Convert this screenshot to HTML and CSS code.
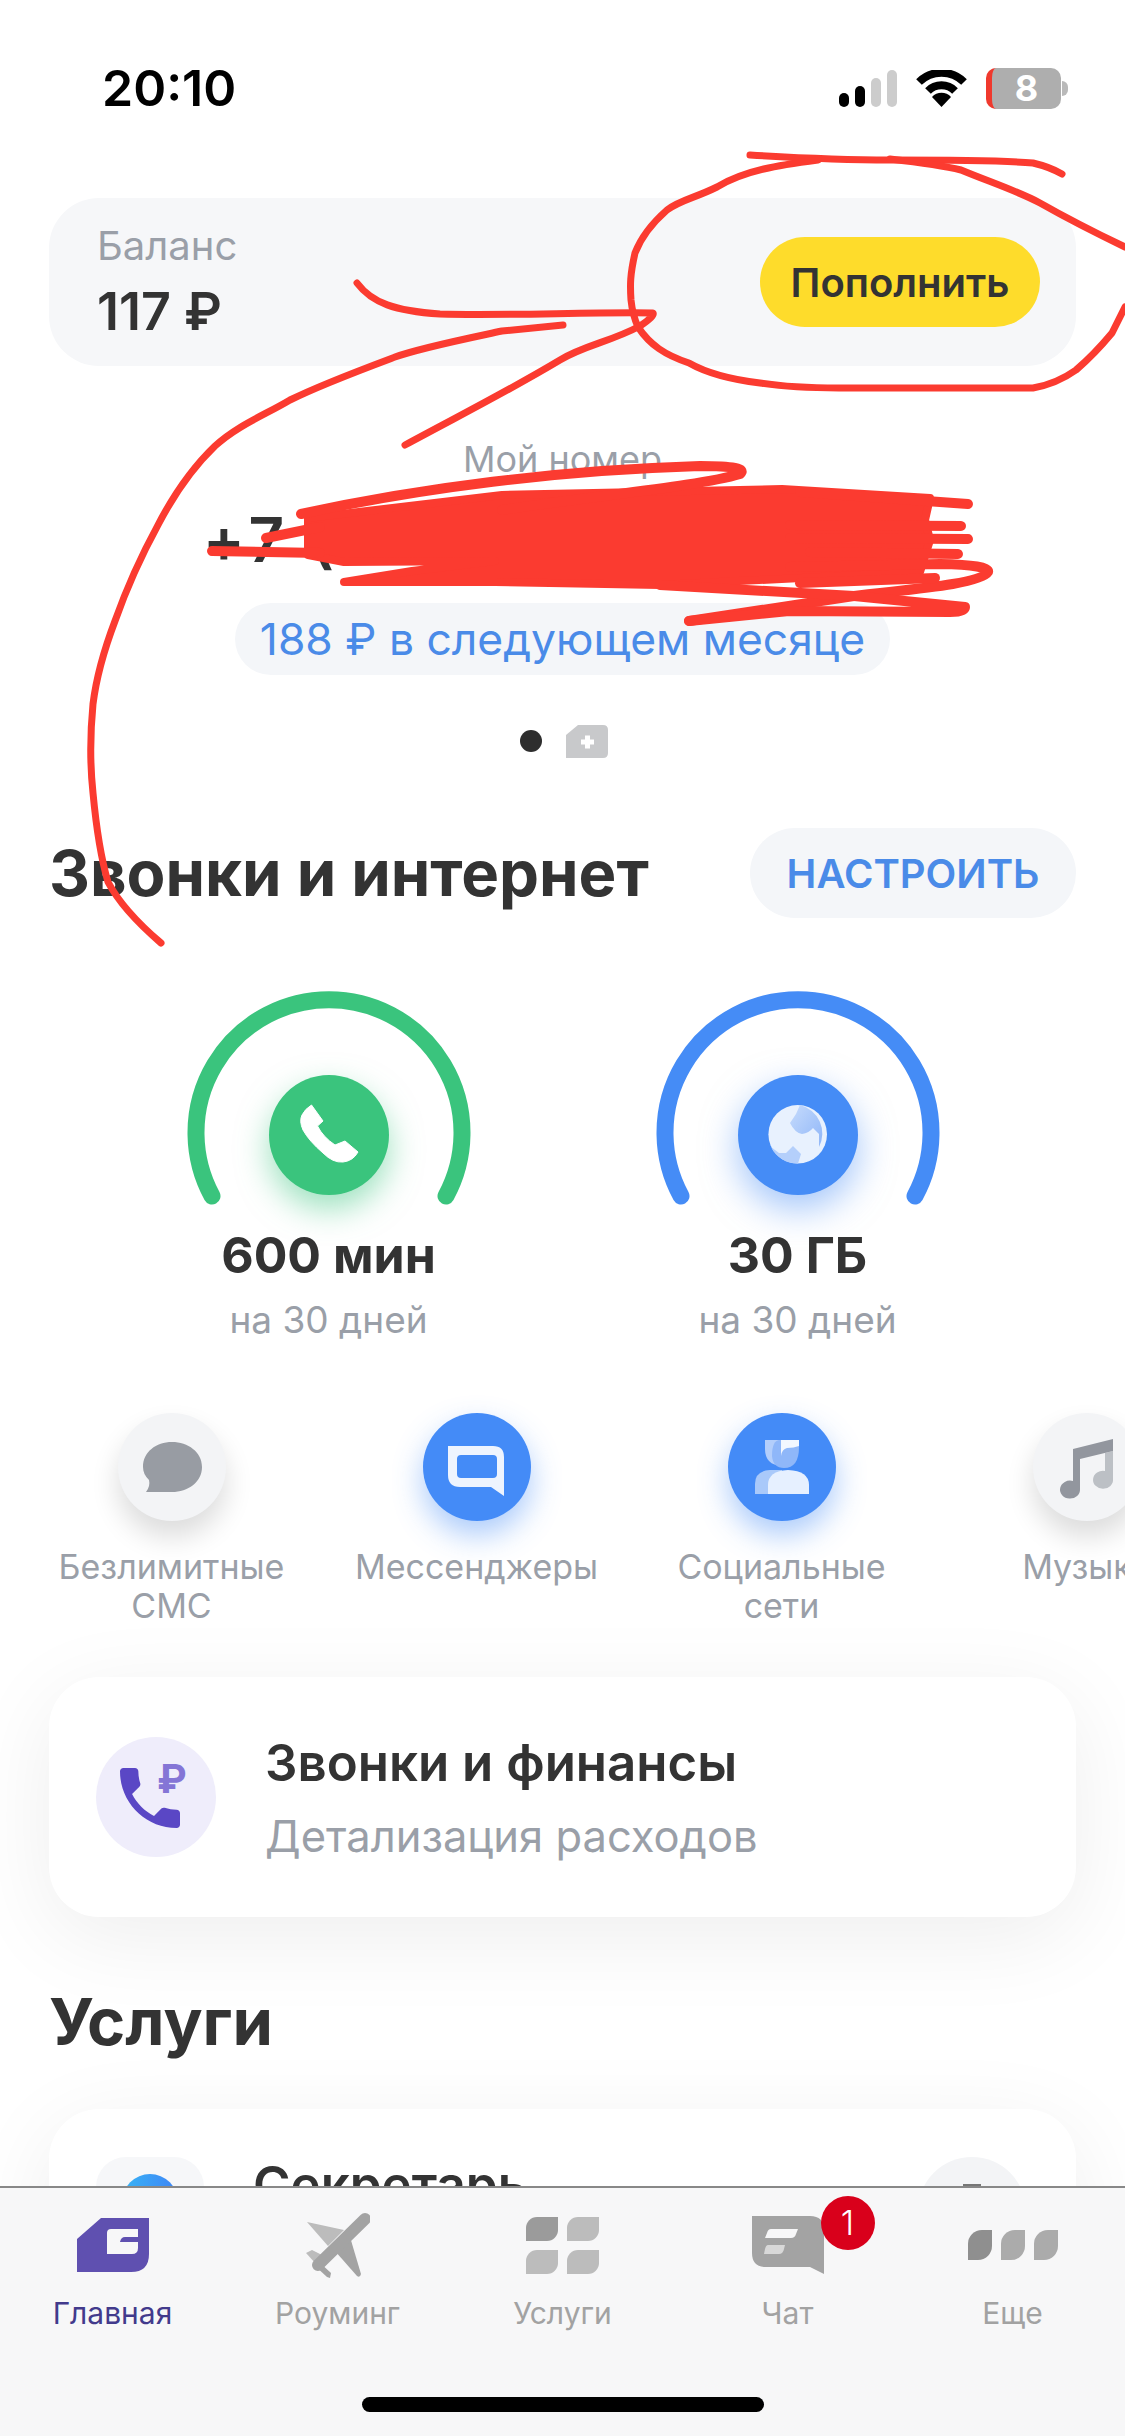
FILE: index.html
```html
<!DOCTYPE html>
<html lang="ru">
<head>
    <meta charset="UTF-8">
    <meta name="viewport" content="width=device-width, initial-scale=1.0">
    <title>Главная</title>
    <link rel="stylesheet" href="styles.css">
</head>
<body>
<div class="screen">
    <div class="status-bar">
        <span class="time">20:10</span>
        <div class="status-icons">
            <svg class="signal" width="58" height="37" viewBox="0 0 58 37">
                <rect x="0" y="23" width="10" height="14" rx="5" fill="#000"/>
                <rect x="16" y="16" width="10" height="21" rx="5" fill="#000"/>
                <rect x="32" y="8" width="10" height="29" rx="5" fill="#ccc"/>
                <rect x="48" y="0" width="10" height="37" rx="5" fill="#ccc"/>
            </svg>
            <svg class="wifi" width="51" height="37" viewBox="0 0 51 37">
                <path d="M3 12A32 32 0 0 1 48 12" fill="none" stroke="#000" stroke-width="8"/>
                <path d="M12 21A19 19 0 0 1 39 21" fill="none" stroke="#000" stroke-width="8"/>
                <path d="M25.5 37L16 27A13 13 0 0 1 35 27Z" fill="#000"/>
            </svg>
            <div class="battery">8</div>
        </div>
    </div>

    <div class="balance-card">
        <div>
            <div class="balance-label">Баланс</div>
            <div class="balance-value">117 ₽</div>
        </div>
        <button class="top-up">Пополнить</button>
    </div>

    <div class="number-block">
        <div class="number-label">Мой номер</div>
        <div class="number-value">+7 (000) 000-00-00</div>
        <div class="next-month">188 ₽ в следующем месяце</div>
    </div>

    <div class="pager">
        <span class="pager-dot"></span>
        <svg width="42" height="33" viewBox="0 0 42 33">
            <path d="M12 0H37Q42 0 42 5V28Q42 33 37 33H0V10Z" fill="#c8c9cb"/>
            <path d="M15 17H28M21.500 10.500V23.500" stroke="#fff" stroke-width="5"/>
        </svg>
    </div>

    <div class="section-head">
        <h2>Звонки и интернет</h2>
        <button class="setup">НАСТРОИТЬ</button>
    </div>

    <div class="gauges">
        <div class="gauge">
            <svg width="300" height="234" viewBox="0 0 300 234">
                <path d="M33 202A133 133 0 1 1 267 202" fill="none" stroke="#3ac47d" stroke-width="17" stroke-linecap="round"/>
                <circle class="glow-green" cx="150" cy="141" r="60" fill="#3ac47d"/>
                <path transform="translate(102 97)" d="M30.500 14L42 30L36.500 35Q42 46 54 54L64 50L77 61Q72 70 62 71Q52 72 42 62Q28 50 22 39Q18 30 21 24Q24 18 30.500 14Z" fill="#fff" stroke="#fff" stroke-linejoin="round"/>
            </svg>
            <div class="gauge-value">600 мин</div>
            <div class="gauge-note">на 30 дней</div>
        </div>
        <div class="gauge">
            <svg width="300" height="234" viewBox="0 0 300 234">
                <defs>
                    <linearGradient id="globeLand" x1="0" y1="0" x2="1" y2="1">
                        <stop offset="0" stop-color="#c6dbfc"/>
                        <stop offset="1" stop-color="#8fb6f8"/>
                    </linearGradient>
                </defs>
                <path d="M33 202A133 133 0 1 1 267 202" fill="none" stroke="#458cf6" stroke-width="17" stroke-linecap="round"/>
                <circle class="glow-blue" cx="150" cy="141" r="60" fill="#458cf6"/>
                <g transform="translate(103 97)">
                    <circle cx="46.700" cy="43.300" r="29.300" fill="#e8f1fe"/>
                    <path d="M49 14L45 23L39 32Q44 42 51 43Q58 42 62 37L68 43L68 56A29.300 29.300 0 0 0 49 14Z" fill="url(#globeLand)"/>
                    <path d="M20 56L28 62L35 62L42 55L50 63L47 72.500A29.300 29.300 0 0 1 20 56Z" fill="#b4cffb"/>
                </g>
            </svg>
            <div class="gauge-value">30 ГБ</div>
            <div class="gauge-note">на 30 дней</div>
        </div>
    </div>

    <div class="chips">
        <div class="chip">
            <div class="chip-circle chip-gray">
                <svg width="108" height="108" viewBox="0 0 108 108">
                    <path d="M54 29C70 29 84 39 84 54C84 69 70 79 54 79H28C31 75 32 71 31 67C27 63 25 59 25 54C25 39 38 29 54 29Z" fill="#989ca3"/>
                </svg>
            </div>
            <div class="chip-label">Безлимитные<br>СМС</div>
        </div>
        <div class="chip">
            <div class="chip-circle chip-blue">
                <svg width="108" height="108" viewBox="0 0 108 108">
                    <path fill-rule="evenodd" d="M25 33H70Q81 33 81 44V83L68 74H37Q25 74 25 62ZM38 42Q34 42 34 46V61Q34 65 38 65H70Q74 65 74 61V46Q74 42 70 42Z" fill="#eef4fe"/>
                </svg>
            </div>
            <div class="chip-label">Мессенджеры</div>
        </div>
        <div class="chip">
            <div class="chip-circle chip-blue">
                <svg width="108" height="108" viewBox="0 0 108 108">
                    <path d="M37 27H54V53Q37 52 37 36Z" fill="#b3cefb"/>
                    <path d="M52 27H71V34Q71 55 56 55Q45 55 44 43Q44 27 52 27Z" fill="#8fb7f9"/>
                    <path d="M53 27H71V33Q66 35 59 35Q54 36 53 43Z" fill="#f2f7ff"/>
                    <path d="M27 81V71Q27 58 42 57H54V81Z" fill="#a9c9fa"/>
                    <path d="M40 81V72Q40 58 60 57Q81 58 81 72V81Z" fill="#e6f0ff"/>
                </svg>
            </div>
            <div class="chip-label">Социальные<br>сети</div>
        </div>
        <div class="chip">
            <div class="chip-circle chip-gray">
                <svg width="108" height="108" viewBox="0 0 108 108">
                    <path d="M72 40L80 38V66A10 9 0 1 1 72 58Z" fill="#bcc0c5"/>
                    <path d="M40 36L80 26V38L47 46V76A10 9 0 1 1 40 68Z" fill="#92969e"/>
                </svg>
            </div>
            <div class="chip-label">Музыка</div>
        </div>
    </div>

    <div class="card">
        <div class="card-icon">
            <svg width="120" height="120" viewBox="0 0 120 120">
                <svg x="24" y="31" width="60" height="60" viewBox="3 3 18 18">
                    <path d="M6.620 10.790c1.440 2.830 3.760 5.140 6.590 6.590l2.200-2.200c.27-.27.67-.36 1.020-.24 1.120.37 2.330.57 3.570.57.55 0 1 .45 1 1V20c0 .55-.45 1-1 1-9.390 0-17-7.610-17-17 0-.55.45-1 1-1h3.500c.55 0 1 .45 1 1 0 1.250.2 2.450.57 3.570.11.35.03.74-.25 1.020l-2.200 2.200z" fill="#5a47c5"/>
                </svg>
                <text class="rouble" x="61" y="56">₽</text>
            </svg>
        </div>
        <div class="card-text">
            <div class="card-title">Звонки и финансы</div>
            <div class="card-sub">Детализация расходов</div>
        </div>
    </div>

    <h2 class="services-head">Услуги</h2>

    <div class="card card-partial">
        <div class="secretary-icon"><span class="secretary-ball"></span></div>
        <div class="card-title">Секретарь</div>
        <div class="secretary-action"><span class="secretary-mark"></span></div>
    </div>

    <!-- нижнее меню -->
    <nav class="tabs">
        <div class="tab tab-active">
            <div class="tab-icon">
                <svg width="72" height="54" viewBox="0 0 72 54">
                    <path fill-rule="evenodd" d="M24 0H72V36Q72 54 54 54H0V21ZM34 11Q30 11 30 15V36H55Q61 36 61 30V24H43Q44 19 48 19H61V11Z" fill="#5f50b0"/>
                </svg>
            </div>
            <span>Главная</span>
        </div>
        <div class="tab">
            <div class="tab-icon">
                <svg width="64" height="65" viewBox="0 0 64 65">
                    <path d="M1 9L38 17L22 33Z" fill="#bcbcbc"/>
                    <path d="M0 40L6 37L20 44L10 51Z" fill="#bcbcbc"/>
                    <path d="M44 24L55 61Q54 65 51 63L29 38Z" fill="#a3a3a3"/>
                    <path d="M12 48L25 60L24 65L21 64L8 52Z" fill="#a3a3a3"/>
                    <path d="M59 6L12 52" stroke="#a3a3a3" stroke-width="12" stroke-linecap="round"/>
                </svg>
            </div>
            <span>Роуминг</span>
        </div>
        <div class="tab">
            <div class="tab-icon">
                <div class="leaf-grid">
                    <i class="leaf leaf-wide leaf-dark"></i>
                    <i class="leaf leaf-wide"></i>
                    <i class="leaf leaf-wide"></i>
                    <i class="leaf leaf-wide"></i>
                </div>
            </div>
            <span>Услуги</span>
        </div>
        <div class="tab">
            <div class="tab-icon">
                <svg width="72" height="58" viewBox="0 0 72 58">
                    <path d="M0 0H58Q72 0 72 14V58L58 51H14Q0 51 0 37Z" fill="#a3a3a3"/>
                    <path d="M19 13H46L44 18Q43 22 39 22H13L15 17Q16 13 19 13Z" fill="#f7f7f8"/>
                    <path d="M16 29H33L32 33Q31 38 27 38H12L13 33Q14 29 16 29Z" fill="#d8d8d8"/>
                </svg>
                <span class="badge">1</span>
            </div>
            <span>Чат</span>
        </div>
        <div class="tab">
            <div class="tab-icon">
                <div class="leaf-row">
                    <i class="leaf leaf-tall leaf-darker"></i>
                    <i class="leaf leaf-tall leaf-mid"></i>
                    <i class="leaf leaf-tall leaf-mid"></i>
                </div>
            </div>
            <span>Еще</span>
        </div>
        <div class="home-bar"></div>
    </nav>

    <!-- пометки маркером поверх экрана -->
    <svg class="marker" width="1125" height="2436" viewBox="0 0 1125 2436">
        <g fill="none" stroke="#fb3b30" stroke-linecap="round" stroke-linejoin="round">
            <g stroke-width="7">
                <path d="M750 155C800 158 850 160 890 160C950 160 1000 160 1033 163Q1050 167 1062 174"/>
                <path d="M818 160C780 165 745 170 717 187C695 198 680 200 667 210C650 225 640 240 635 253C630 275 630 285 631 300C632 310 634 318 638 327C650 345 665 355 689 363C710 375 735 380 760 383C785 387 810 388 839 388L1033 388C1050 385 1062 380 1076 370C1090 358 1102 345 1112 333L1125 307"/>
                <path d="M890 159C925 163 945 166 961 170C990 182 1020 192 1040 203C1070 220 1100 235 1125 247"/>
                <path d="M357 283C372 303 395 311 440 314C500 316 590 312 653 313Q655 316 640 326C610 342 585 345 560 360C510 390 470 410 405 445"/>
                <path d="M563 325L502 331C460 340 420 348 395 357C355 372 320 385 290 400C265 415 238 425 215 446C190 470 172 498 158 525C140 558 126 590 115 621C104 650 96 680 93 704C90 735 90 765 93 793C96 825 100 855 108 882C120 905 140 925 161 943"/>
            </g>
            <path d="M308 518L502 495L782 489L930 498L925 520L930 540L920 572L660 585L495 582L344 582L412 571L495 561L344 562L308 555Z" fill="#fb3b30" stroke-width="8"/>
            <g stroke-width="10">
                <path d="M212 551L320 553"/>
                <path d="M266 538L320 527"/>
                <path d="M301 514C420 488 560 470 700 466Q750 466 740 474C700 486 600 495 502 510"/>
                <path d="M800 492L968 504"/>
                <path d="M790 525L961 526"/>
                <path d="M790 538L968 539"/>
                <path d="M810 552L958 554"/>
                <path d="M790 567L940 564Q990 565 988 572C980 585 900 590 854 596L689 621"/>
                <path d="M800 583L935 578"/>
                <path d="M660 585L854 596L965 607Q965 612 950 612L789 611L689 621"/>
            </g>
        </g>
    </svg>
</div>
</body>
</html>
```

FILE: styles.css
```css
* {
    box-sizing: border-box;
}
html, body {
    margin: 0;
    padding: 0;
}
body {
    font-family: Inter, "Noto Sans", sans-serif;
    color: #333;
    background-color: #fff;
}
h2 {
    margin: 0;
}
button {
    font-family: inherit;
    border: none;
    cursor: pointer;
}
.screen {
    position: relative;
    width: 1125px;
    height: 2436px;
    overflow: hidden;
    background-color: #fff;
}

/* status bar */
.status-bar {
    height: 176px;
    padding: 0 64px 0 102px;
    display: flex;
    justify-content: space-between;
    align-items: center;
}
.time {
    font-size: 50px;
    font-weight: 600;
    color: #000;
}
.status-icons {
    display: flex;
    align-items: center;
    gap: 19px;
}
.battery {
    position: relative;
    width: 75px;
    height: 41px;
    border-radius: 10px;
    border-left: 6px solid #f0392d;
    background-color: #aeaeae;
    color: #fff;
    font-size: 36px;
    font-weight: 700;
    line-height: 41px;
    text-align: center;
}
.battery::after {
    content: "";
    position: absolute;
    right: -7px;
    top: 13px;
    width: 6px;
    height: 15px;
    border-radius: 0 8px 8px 0;
    background-color: #b9b9b9;
}

/* balance */
.balance-card {
    height: 168px;
    margin: 22px 49px 0;
    padding: 0 36px 0 48px;
    display: flex;
    justify-content: space-between;
    align-items: center;
    border-radius: 50px;
    background-color: #f6f7f9;
}
.balance-label {
    font-size: 40px;
    line-height: 44px;
    color: #9a9fa8;
}
.balance-value {
    margin-top: 16px;
    font-size: 52px;
    font-weight: 600;
    line-height: 56px;
}
.top-up {
    width: 280px;
    height: 90px;
    border-radius: 45px;
    background-color: #fedc2b;
    color: #333;
    font-size: 40px;
    font-weight: 600;
}

/* phone number */
.number-block {
    margin-top: 73px;
    display: flex;
    flex-direction: column;
    align-items: center;
}
.number-label {
    font-size: 36px;
    line-height: 40px;
    color: #9a9fa8;
}
.number-value {
    margin-top: 26px;
    font-size: 62px;
    font-weight: 600;
    line-height: 70px;
    letter-spacing: 5.5px;
    white-space: nowrap;
}
.next-month {
    margin-top: 28px;
    height: 72px;
    padding: 0 25px;
    border-radius: 36px;
    background-color: #f4f6f9;
    color: #4a8be8;
    font-size: 44.4px;
    line-height: 72px;
}
.pager {
    margin-top: 49px;
    height: 34px;
    display: flex;
    justify-content: center;
    align-items: center;
    gap: 24px;
    padding-left: 2px;
}
.pager-dot {
    width: 22px;
    height: 22px;
    border-radius: 50%;
    background-color: #2e2e2e;
}

/* section header */
.section-head {
    margin: 70px 49px 0 49px;
    display: flex;
    justify-content: space-between;
    align-items: center;
}
.section-head h2 {
    font-size: 63.5px;
    font-weight: 700;
    line-height: 80px;
}
.services-head {
    font-size: 65px;
    font-weight: 700;
    line-height: 80px;
}
.setup {
    width: 326px;
    height: 90px;
    border-radius: 45px;
    background-color: #f4f6f9;
    color: #4a8be8;
    font-size: 40px;
    font-weight: 600;
}

/* gauges */
.gauges {
    margin-top: 76px;
    padding-left: 94px;
    display: flex;
}
.gauge {
    width: 469px;
    display: flex;
    flex-direction: column;
    align-items: center;
}
.gauge svg {
    display: block;
    overflow: visible;
}
.glow-green {
    filter: drop-shadow(0 14px 16px rgba(58, 196, 125, 0.5));
}
.glow-blue {
    filter: drop-shadow(0 14px 18px rgba(69, 140, 246, 0.5));
}
.gauge-value {
    margin-top: -1px;
    font-size: 50px;
    font-weight: 700;
    line-height: 56px;
}
.gauge-note {
    margin-top: 17px;
    font-size: 37px;
    line-height: 40px;
    color: #9a9fa8;
}

/* option chips */
.chips {
    margin-top: 73px;
    padding-left: 19px;
    display: flex;
}
.chip {
    flex: none;
    width: 305px;
    display: flex;
    flex-direction: column;
    align-items: center;
}
.chip-circle {
    width: 108px;
    height: 108px;
    border-radius: 50%;
}
.chip-gray {
    background-color: #f3f4f6;
    box-shadow: 0 16px 28px rgba(0, 0, 0, 0.14);
}
.chip-blue {
    background-color: #448bf7;
    box-shadow: 0 14px 30px rgba(68, 139, 247, 0.45);
}
.chip-label {
    margin-top: 26px;
    font-size: 34px;
    line-height: 39px;
    text-align: center;
    color: #9a9fa8;
    white-space: nowrap;
}

/* cards */
.card {
    height: 240px;
    margin: 52px 49px 0;
    padding: 0 47px;
    display: flex;
    align-items: center;
    gap: 49px;
    border-radius: 50px;
    background-color: #fff;
    box-shadow: 0 20px 90px rgba(0, 0, 0, 0.07);
}
.card-icon {
    width: 120px;
    height: 120px;
    border-radius: 50%;
    background-color: #efedfb;
}
.rouble {
    font-size: 40px;
    font-weight: 700;
    fill: #8475d6;
}
.card-text {
    padding-top: 2px;
}
.card-title {
    font-size: 51px;
    font-weight: 600;
    line-height: 56px;
}
.card-sub {
    margin-top: 20px;
    font-size: 43.5px;
    line-height: 50px;
    color: #9a9fa8;
}
.services-head {
    margin: 65px 0 0 49px;
}
.card-partial {
    margin-top: 47px;
    padding-top: 48px;
    padding-right: 50px;
    align-items: flex-start;
}
.secretary-icon {
    width: 108px;
    height: 108px;
    border-radius: 30px;
    background-color: #f6f7f9;
    display: flex;
    justify-content: center;
    padding-top: 17px;
}
.secretary-ball {
    width: 56px;
    height: 56px;
    border-radius: 50%;
    background: linear-gradient(90deg, #38b4f5, #3f85f6);
}
.card-partial .card-title {
    flex: 1;
}
.secretary-action {
    width: 108px;
    height: 108px;
    border-radius: 50%;
    background-color: #f3f4f6;
    display: flex;
    justify-content: center;
    padding-top: 27px;
}
.secretary-mark {
    width: 18px;
    height: 18px;
    background-color: #777;
}

/* bottom tabs */
.tabs {
    position: absolute;
    left: 0;
    right: 0;
    bottom: 0;
    height: 250px;
    padding-top: 24px;
    display: flex;
    border-top: 2px solid #888;
    background-color: #f7f7f8;
}
.tab {
    flex: 1;
    display: flex;
    flex-direction: column;
    align-items: center;
    color: #a2a2a2;
    font-size: 30px;
    line-height: 34px;
}
.tab-active {
    color: #423a8c;
}
.tab-icon {
    position: relative;
    height: 66px;
    margin-bottom: 18px;
    display: flex;
    align-items: center;
}
.tab-icon svg {
    display: block;
}
.leaf-grid {
    display: grid;
    grid-template-columns: 32px 32px;
    gap: 9px;
}
.leaf-row {
    display: flex;
    gap: 9px;
}
.leaf {
    display: block;
    background-color: #bcbcbc;
}
.leaf-wide {
    width: 32px;
    height: 24px;
    border-radius: 11px 0 11px 0;
}
.leaf-tall {
    width: 24px;
    height: 30px;
    border-radius: 14px 0 14px 0;
}
.leaf-dark {
    background-color: #9b9b9b;
}
.leaf-darker {
    background-color: #8f8f8f;
}
.leaf-mid {
    background-color: #ababab;
}
.badge {
    position: absolute;
    left: 69px;
    top: -16px;
    width: 54px;
    height: 54px;
    border-radius: 50%;
    background-color: #d9001b;
    color: #fff;
    font-size: 34px;
    font-weight: 300;
    line-height: 54px;
    text-align: center;
}
.home-bar {
    position: absolute;
    left: 362px;
    bottom: 24px;
    width: 402px;
    height: 15px;
    border-radius: 8px;
    background-color: #000;
}

/* marker strokes drawn over the whole screen */
.marker {
    position: absolute;
    left: 0;
    top: 0;
    pointer-events: none;
}
```
